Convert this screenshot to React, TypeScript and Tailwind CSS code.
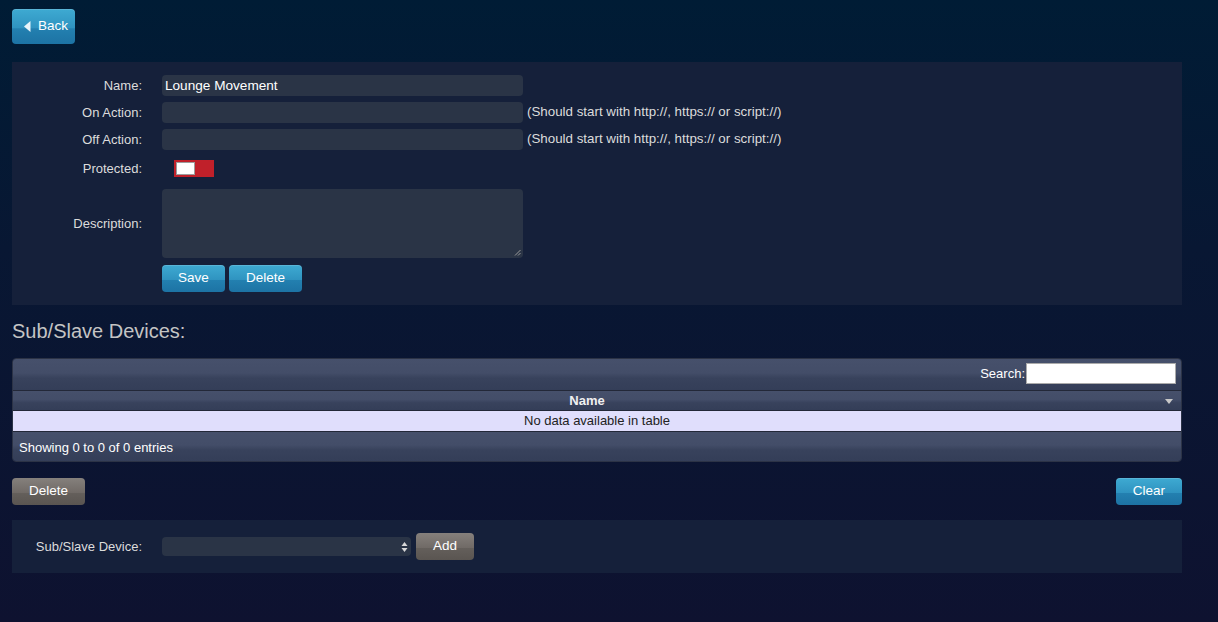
import React from "react";

const blueBtn =
  "rounded-[4px] bg-[linear-gradient(to_bottom,#3eaad2_0%,#2f93c0_55%,#2380b0_56%,#1d73a4_100%)] text-white text-[13.5px] shadow-[inset_0_1px_0_rgba(255,255,255,0.15)]";
const greyBtn =
  "rounded-[4px] bg-[linear-gradient(to_bottom,#85807c_0%,#706a66_55%,#645f5b_56%,#5a5551_100%)] text-white text-[13.5px]";
const wave =
  "bg-[linear-gradient(to_bottom,#46506b_0%,#434d68_45%,#38425c_62%,#343e58_100%)]";

function Label({ children }: { children: React.ReactNode }) {
  return (
    <div className="w-[130px] shrink-0 text-right text-[13px] text-[#dcdcdc]">{children}</div>
  );
}

export default function App() {
  return (
    <div
      className="min-h-screen bg-[linear-gradient(to_bottom,#001c35_0%,#081733_40%,#0e1230_100%)] pl-3 pt-[9px] pb-[49px]"
      style={{ fontFamily: '"Liberation Sans", Arial, sans-serif' }}
    >
      <div className="w-[1170px]">
        <button className={`${blueBtn} flex h-[35px] w-[63px] items-center gap-[7px] pl-[12px] text-[13.5px]`}>
          <svg width="7" height="11" viewBox="0 0 7 11">
            <path d="M6.5 0 L6.5 11 L0 5.5 Z" fill="#e8f4fa" />
          </svg>
          <span>Back</span>
        </button>

        {/* Form panel */}
        <div className="mt-[18px] bg-[#15203a] pt-[13px] pb-[13px]">
          <div className="flex items-center gap-5">
            <Label>Name:</Label>
            <div className="flex h-[21px] w-[361px] items-center rounded-[4px] bg-[#2a3446] px-[3px] pt-[2px] text-[13.6px] text-white">
              Lounge Movement
            </div>
          </div>
          <div className="mt-[6px] flex items-center gap-5">
            <Label>On Action:</Label>
            <div className="h-[21px] w-[361px] rounded-[4px] bg-[#2a3446]" />
            <span className="-ml-4 text-[13.35px] text-[#dcdcdc]">
              (Should start with http://, https:// or script://)
            </span>
          </div>
          <div className="mt-[6px] flex items-center gap-5">
            <Label>Off Action:</Label>
            <div className="h-[21px] w-[361px] rounded-[4px] bg-[#2a3446]" />
            <span className="-ml-4 text-[13.35px] text-[#dcdcdc]">
              (Should start with http://, https:// or script://)
            </span>
          </div>
          <div className="mt-[6px] flex h-[25px] items-center gap-5">
            <Label>Protected:</Label>
            <div className="ml-3 flex h-[17px] w-[40px] items-center bg-[#c0202a] pl-[2px]">
              <div className="h-[13px] w-[19px] border border-[#9c9c9c] bg-white" />
            </div>
          </div>
          <div className="mt-[8px] flex items-center gap-5">
            <Label>Description:</Label>
            <div className="relative h-[69px] w-[361px] rounded-[4px] bg-[#2a3446]">
              <svg className="absolute bottom-[2px] right-[2px]" width="7" height="7" viewBox="0 0 7 7">
                <path d="M6.5 1 L1 6.5 M6.5 4 L4 6.5" stroke="#9a9a9a" strokeWidth="1" />
              </svg>
            </div>
          </div>
          <div className="mt-[7px] flex gap-1 pl-[150px]">
            <button className={`${blueBtn} h-[27px] w-[63px]`}>Save</button>
            <button className={`${blueBtn} h-[27px] w-[73px]`}>Delete</button>
          </div>
        </div>

        <h2 className="mt-[14px] text-[20px] leading-[24px] text-[#c4c4c4]">Sub/Slave Devices:</h2>

        {/* Table */}
        <div className="mt-[15px] overflow-hidden rounded-[4px] border border-[#2c3346]">
          <div className={`${wave} flex h-[31px] items-center justify-end gap-[1px] pr-[5px] pb-[2px]`}>
            <span className="text-[13px] text-white">Search:</span>
            <div className="h-[21px] w-[150px] border border-[#aaa] bg-white" />
          </div>
          <div
            className={`${wave} relative flex h-[21px] items-center justify-center border-y border-[#232838] pr-[20px] text-[13px] font-bold text-[#f0f0f0]`}
          >
            Name
            <svg className="absolute right-[8px] top-[8px]" width="8" height="5" viewBox="0 0 8 5">
              <path d="M0 0 L8 0 L4 5 Z" fill="#c8c8c8" />
            </svg>
          </div>
          <div className="flex h-[21px] items-center justify-center border-b border-[#232838] bg-[#e0defc] text-[13px] text-[#222]">
            No data available in table
          </div>
          <div className={`${wave} flex h-[29px] items-center pl-[6px] pt-[3px] text-[13px] text-white`}>
            Showing 0 to 0 of 0 entries
          </div>
        </div>

        <div className="mt-4 flex justify-between">
          <button className={`${greyBtn} h-[27px] w-[73px]`}>Delete</button>
          <button className={`${blueBtn} h-[27px] w-[66px]`}>Clear</button>
        </div>

        <div className="mt-[15px] flex h-[53px] items-center gap-5 bg-[#15203a]">
          <Label>Sub/Slave Device:</Label>
          <div className="flex h-[19px] w-[249px] items-center justify-end rounded-[4px] bg-[#2a3446] pr-[3px]">
            <svg width="7" height="12" viewBox="0 0 7 12">
              <path d="M3.5 1 L6.5 5 L0.5 5 Z M3.5 11 L6.5 7 L0.5 7 Z" fill="#d8d8d8" />
            </svg>
          </div>
          <button className={`${greyBtn} -ml-[15px] h-[27px] w-[58px]`}>Add</button>
        </div>
      </div>
    </div>
  );
}
